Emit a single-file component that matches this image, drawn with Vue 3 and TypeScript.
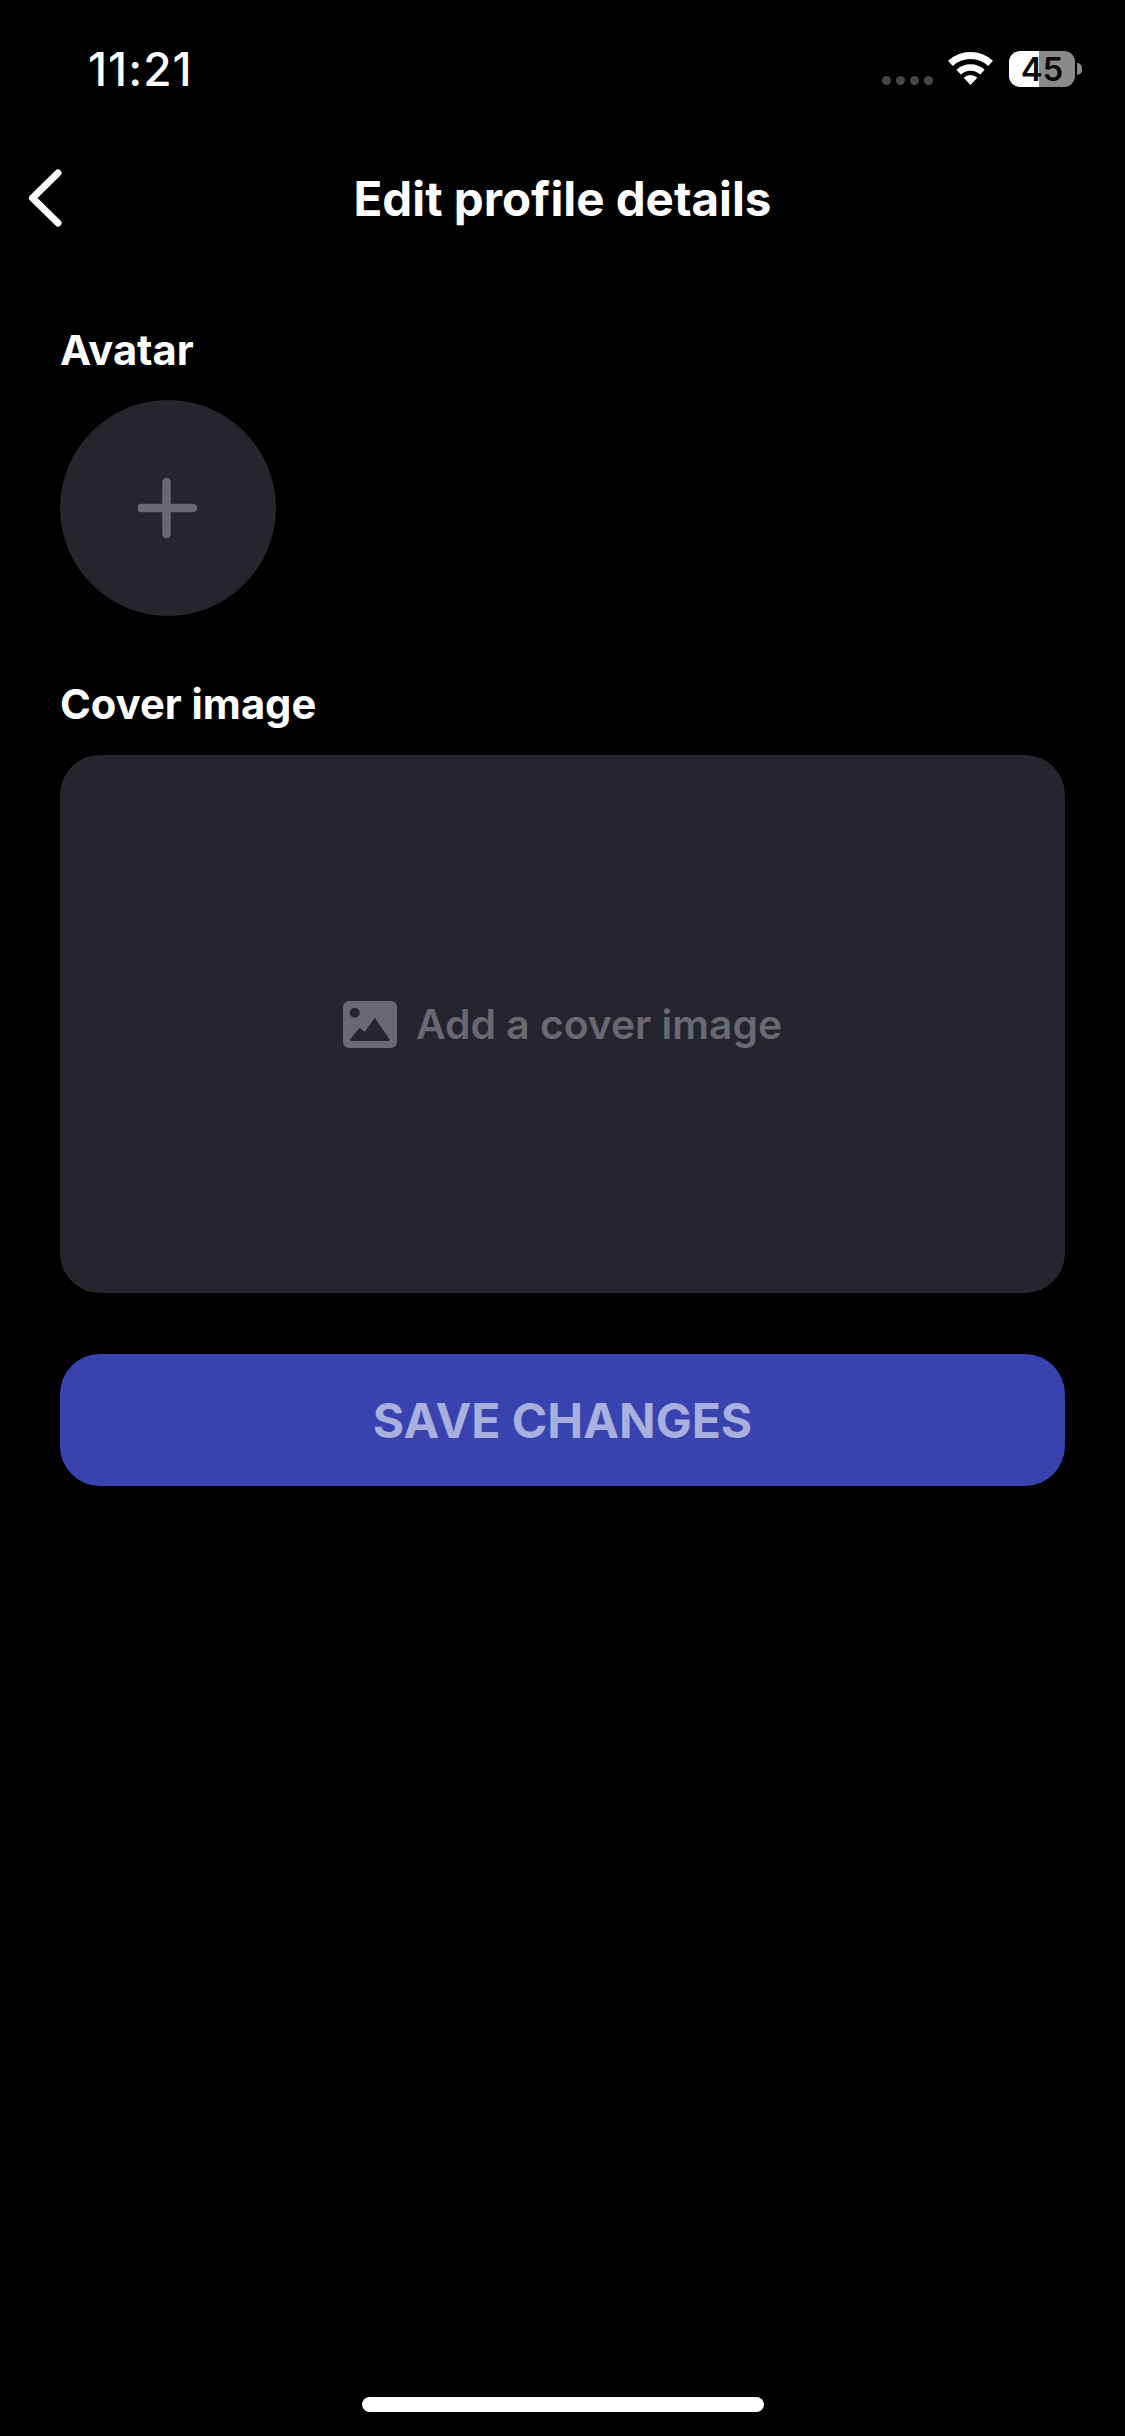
<script setup lang="ts">
const dots: number[] = [1, 2, 3, 4]
</script>

<template>
  <div class="screen">
    <header class="status">
      <span class="time">11:21</span>
      <div class="indicators">
        <div class="signal">
          <i v-for="d in dots" :key="d" class="dot"></i>
        </div>
        <svg class="wifi" width="45" height="34" viewBox="0 0 45 34" aria-hidden="true">
          <path d="M2.4 12.4A29.5 29.5 0 0 1 42.6 12.4" fill="none" stroke="#fff" stroke-width="7" />
          <path d="M10.6 21.2A17.5 17.5 0 0 1 34.4 21.2" fill="none" stroke="#fff" stroke-width="6.5" />
          <path d="M22.5 34L15.7 26.7A10 10 0 0 1 29.3 26.7Z" fill="#fff" />
        </svg>
        <div class="battery">
          <div class="cell">45</div>
          <i class="nub"></i>
        </div>
      </div>
    </header>

    <nav class="nav">
      <button class="back" type="button" aria-label="Back">
        <svg width="36" height="60" viewBox="0 0 36 60" aria-hidden="true">
          <path d="M32 4L6.5 29L32 54" fill="none" stroke="#fff" stroke-width="7" stroke-linecap="round" stroke-linejoin="round" />
        </svg>
      </button>
      <h1 class="title">Edit profile details</h1>
    </nav>

    <main class="content">
      <h2 class="label">Avatar</h2>
      <button class="avatar" type="button" aria-label="Add avatar">
        <svg width="60" height="60" viewBox="0 0 60 60" aria-hidden="true">
          <path d="M3 30H55M28.5 4V56" fill="none" stroke="#6a6870" stroke-width="8.5" stroke-linecap="round" />
        </svg>
      </button>

      <h2 class="label cover-label">Cover image</h2>
      <button class="cover" type="button">
        <svg width="54" height="47" viewBox="0 0 54 47" aria-hidden="true">
          <rect width="54" height="47" rx="6" fill="#6a6870" />
          <circle cx="11.7" cy="11.7" r="5" fill="#26242d" />
          <path d="M7 38.5L16.7 26.7L21.7 31L31.7 16.7L46.7 38.5Q46.7 40 45 40H8.5Q7 40 7 38.5Z" fill="#26242d" />
        </svg>
        <span class="cover-text">Add a cover image</span>
      </button>

      <button class="save" type="button">SAVE CHANGES</button>
    </main>

    <div class="home"></div>
  </div>
</template>

<style>
html,
body {
  margin: 0;
  background: #000;
}
</style>

<style scoped>
.screen {
  width: 1125px;
  height: 2436px;
  background: #000;
  color: #fff;
  display: flex;
  flex-direction: column;
  font-family: Inter, "Noto Sans", sans-serif;
  overflow: hidden;
}

.status {
  height: 137px;
  box-sizing: border-box;
  padding: 43px 43px 0 88px;
  display: flex;
  justify-content: space-between;
  align-items: flex-start;
}

.time {
  font-weight: 500;
  font-size: 46px;
  line-height: 52px;
  letter-spacing: 1px;
}

.indicators {
  display: flex;
  align-items: flex-start;
  padding-top: 8px;
}

.signal {
  display: flex;
  gap: 5px;
  margin-top: 25px;
  margin-right: 15px;
}

.dot {
  width: 9px;
  height: 9px;
  border-radius: 50%;
  background: #464646;
}

.battery {
  display: flex;
  align-items: center;
  margin-left: 16px;
}

.cell {
  width: 66px;
  height: 36px;
  border-radius: 11px;
  background: linear-gradient(90deg, #fff 0 30px, #8a8a8a 30px);
  color: #0a0a0a;
  font-weight: 600;
  font-size: 33px;
  line-height: 36px;
  text-align: center;
}

.nub {
  width: 5px;
  height: 12px;
  margin-left: 2px;
  border-radius: 0 6px 6px 0;
  background: #8a8a8a;
}

.nav {
  height: 60px;
  margin-top: 32px;
  display: grid;
  grid-template-columns: 1fr auto 1fr;
  align-items: center;
  padding-left: 26px;
  padding-right: 26px;
}

.back {
  justify-self: start;
  padding: 0;
  border: 0;
  background: none;
  display: flex;
}

.title {
  grid-column: 2;
  margin: 0;
  font-size: 47.5px;
  line-height: 60px;
  font-weight: 700;
  white-space: nowrap;
}

.content {
  display: flex;
  flex-direction: column;
  align-items: flex-start;
  padding: 0 60px;
  margin-top: 95px;
}

.label {
  margin: 0;
  font-size: 41.7px;
  line-height: 52px;
  font-weight: 700;
}

.avatar {
  width: 216px;
  height: 216px;
  margin-top: 24px;
  padding: 0;
  border: 0;
  border-radius: 50%;
  background: #26242d;
  display: flex;
  align-items: center;
  justify-content: center;
}

.cover-label {
  margin-top: 62px;
}

.cover {
  width: 1005px;
  height: 538px;
  margin-top: 25px;
  padding: 0;
  border: 0;
  border-radius: 40px;
  background: #26242d;
  display: flex;
  align-items: center;
  justify-content: center;
  gap: 19px;
  font-family: inherit;
}

.cover-text {
  font-size: 40.8px;
  font-weight: 600;
  color: #6a6870;
}

.save {
  width: 1005px;
  height: 132px;
  margin-top: 61px;
  padding: 0;
  border: 0;
  border-radius: 40px;
  background: #3843b0;
  color: #a9b0de;
  font-family: inherit;
  font-size: 48px;
  font-weight: 700;
  text-align: center;
}

.home {
  width: 402px;
  height: 15px;
  margin: auto auto 24px;
  border-radius: 8px;
  background: #fff;
  flex: none;
}
</style>
